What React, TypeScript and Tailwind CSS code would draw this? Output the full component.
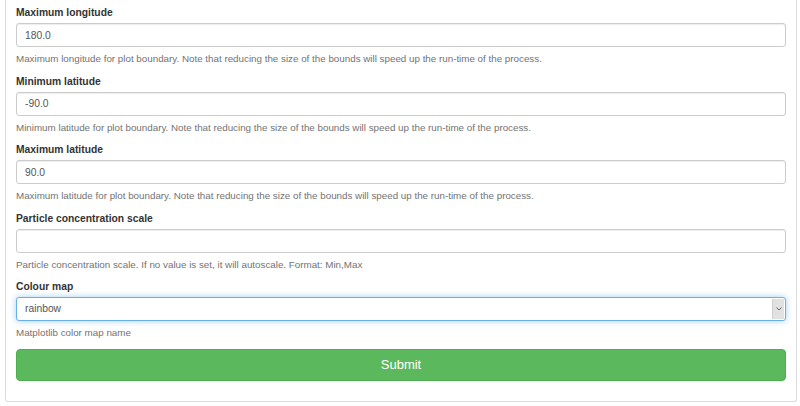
import React from 'react'

const fields = [
  {
    label: 'Maximum longitude',
    value: '180.0',
    help: 'Maximum longitude for plot boundary. Note that reducing the size of the bounds will speed up the run-time of the process.',
  },
  {
    label: 'Minimum latitude',
    value: '-90.0',
    help: 'Minimum latitude for plot boundary. Note that reducing the size of the bounds will speed up the run-time of the process.',
  },
  {
    label: 'Maximum latitude',
    value: '90.0',
    help: 'Maximum latitude for plot boundary. Note that reducing the size of the bounds will speed up the run-time of the process.',
  },
  {
    label: 'Particle concentration scale',
    value: '',
    help: 'Particle concentration scale. If no value is set, it will autoscale. Format: Min,Max',
  },
]

export default function App() {
  return (
    <div className="w-[800px] h-[406px] bg-white overflow-hidden font-['Liberation_Sans',Arial,sans-serif] text-[9.8px] text-[#333]">
      <div className="ml-[5px] w-[792px] border border-t-0 border-[#dcdcdc] rounded-b-[3px] px-[10px] pt-[5px] pb-[20px] bg-white">
        {fields.map((f) => (
          <div key={f.label} className="mb-[7.5px]">
            <label className="block font-bold text-[10.3px] leading-[15px] mb-[3px]">{f.label}</label>
            <input
              type="text"
              defaultValue={f.value}
              className="block w-full h-[24px] px-[8px] border border-[#ccc] rounded-[3px] bg-white text-[10.3px] text-[#555] outline-none shadow-[inset_0_1px_1px_rgba(0,0,0,0.075)]"
            />
            <p className="mt-[4px] leading-[15px] text-[#737373]">{f.help}</p>
          </div>
        ))}

        <div>
          <label className="block font-bold text-[10.3px] leading-[15px] mb-[3px]">Colour map</label>
          <div className="flex h-[24px] border border-[#66afe9] rounded-[3px] bg-white shadow-[0_0_6px_rgba(102,175,233,0.6)]">
            <div className="flex-1 flex items-center px-[8px] text-[10.3px] text-[#555]">rainbow</div>
            <div className="w-[12px] my-[1px] mr-[1px] bg-[#e1e1e1] border-l border-[#d0d0d0] flex items-center justify-center">
              <svg width="6" height="4" viewBox="0 0 6 4">
                <path d="M0.5 0.5 L3 3 L5.5 0.5" fill="none" stroke="#666" strokeWidth="1" />
              </svg>
            </div>
          </div>
          <p className="mt-[4px] leading-[15px] text-[#737373]">Matplotlib color map name</p>
        </div>

        <button
          type="button"
          className="mt-[9px] block w-full h-[32px] bg-[#5cb85c] border border-[#4cae4c] rounded-[4px] text-white text-[13px]"
        >
          Submit
        </button>
      </div>
    </div>
  )
}
